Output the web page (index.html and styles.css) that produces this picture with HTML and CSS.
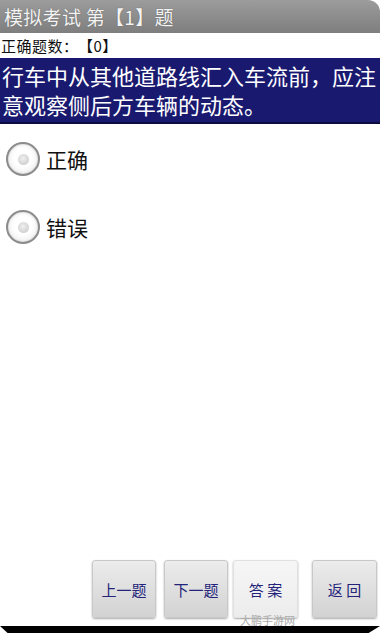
FILE: index.html
```html
<!DOCTYPE html>
<html>
<head>
<meta charset="utf-8">
<link rel="stylesheet" href="styles.css">
</head>
<body>
<div class="screen">
  <div class="titlebar">模拟考试 第【1】题</div>
  <div class="score">正确题数<span class="colon">：</span>【0】</div>
  <div class="question">行车中从其他道路线汇入车流前，应注意观察侧后方车辆的动态。</div>
  <div class="options">
    <div class="option"><span class="radio"><span class="dot"></span></span><span class="label">正确</span></div>
    <div class="option"><span class="radio"><span class="dot"></span></span><span class="label">错误</span></div>
  </div>
  <div class="spacer"></div>
  <div class="buttons">
    <div class="btn b1">上一题</div>
    <div class="btn b2">下一题</div>
    <div class="btn b3 light">答 案</div>
    <div class="btn b4">返 回</div>
  </div>
  <div class="wmrow"><span class="wm">大鹏手游网</span></div>
  <div class="footer"></div>
</div>
</body>
</html>
```
FILE: styles.css
```css
html, body {
  margin: 0;
  padding: 0;
  background: #fff;
}
body {
  font-family: "Noto Sans CJK SC", "DejaVu Sans", sans-serif;
}
.screen {
  width: 380px;
  height: 633px;
  display: flex;
  flex-direction: column;
  overflow: hidden;
  background: #fff;
}
.titlebar {
  height: 33px;
  background: linear-gradient(#9c9c9c, #7e7e7e);
  color: #f4f4f4;
  font-size: 19px;
  line-height: 33px;
  padding-left: 4px;
  border-top-right-radius: 12px;
  text-shadow: 0 0 1px #555;
  white-space: nowrap;
  letter-spacing: 0.3px;
}
.score {
  height: 25px;
  line-height: 25px;
  font-size: 15px;
  color: #111;
  padding-left: 1px;
  letter-spacing: 0.5px;
}
.colon {
  display: inline-block;
  width: 15px;
  text-align: center;
}
.question {
  background: #191970;
  color: #fff;
  font-size: 22px;
  line-height: 29px;
  padding: 3px 0 3px 2px;
  border-bottom: 2px solid #0c0c40;
}
.options {
  display: flex;
  flex-direction: column;
  gap: 34px;
  padding: 18px 0 0 6px;
}
.option {
  display: flex;
  align-items: center;
  gap: 6px;
  height: 34px;
}
.radio {
  width: 30px;
  height: 30px;
  border: 2px solid #8c8c8c;
  border-radius: 50%;
  background: radial-gradient(circle at 50% 45%, #ffffff 40%, #e6e6e6 100%);
  display: flex;
  align-items: center;
  justify-content: center;
  box-shadow: inset 0 0 2px #bbb;
}
.dot {
  width: 11px;
  height: 11px;
  border-radius: 50%;
  background: radial-gradient(circle at 45% 40%, #f0f0f0, #c4c4c4);
}
.label {
  font-size: 21px;
  color: #111;
}
.spacer {
  flex: 1;
}
.buttons {
  display: flex;
  padding-left: 92px;
  height: 58px;
}
.btn {
  width: 64px;
  height: 58px;
  box-sizing: border-box;
  border-radius: 3px;
  background: linear-gradient(#ececec, #d2d2d2);
  border: 1px solid #c8c8c8;
  box-shadow: 0 1px 2px #aaa;
  color: #23237a;
  font-size: 15px;
  display: flex;
  align-items: center;
  justify-content: center;
  white-space: nowrap;
}
.btn.light {
  background: linear-gradient(#f6f6f6, #ececec);
  border-color: #e0e0e0;
}
.b2 { margin-left: 8px; }
.b3 { margin-left: 5px; width: 65px; }
.b4 { margin-left: 14px; width: 65px; }
.wmrow {
  height: 8px;
  position: relative;
}
.wm {
  position: absolute;
  left: 240px;
  top: -4px;
  font-size: 11px;
  color: #aaa;
  line-height: 12px;
}
.footer {
  height: 7px;
  background: #000;
  clip-path: polygon(0 0, 100% 0, 97% 100%, 2% 100%);
}
```
